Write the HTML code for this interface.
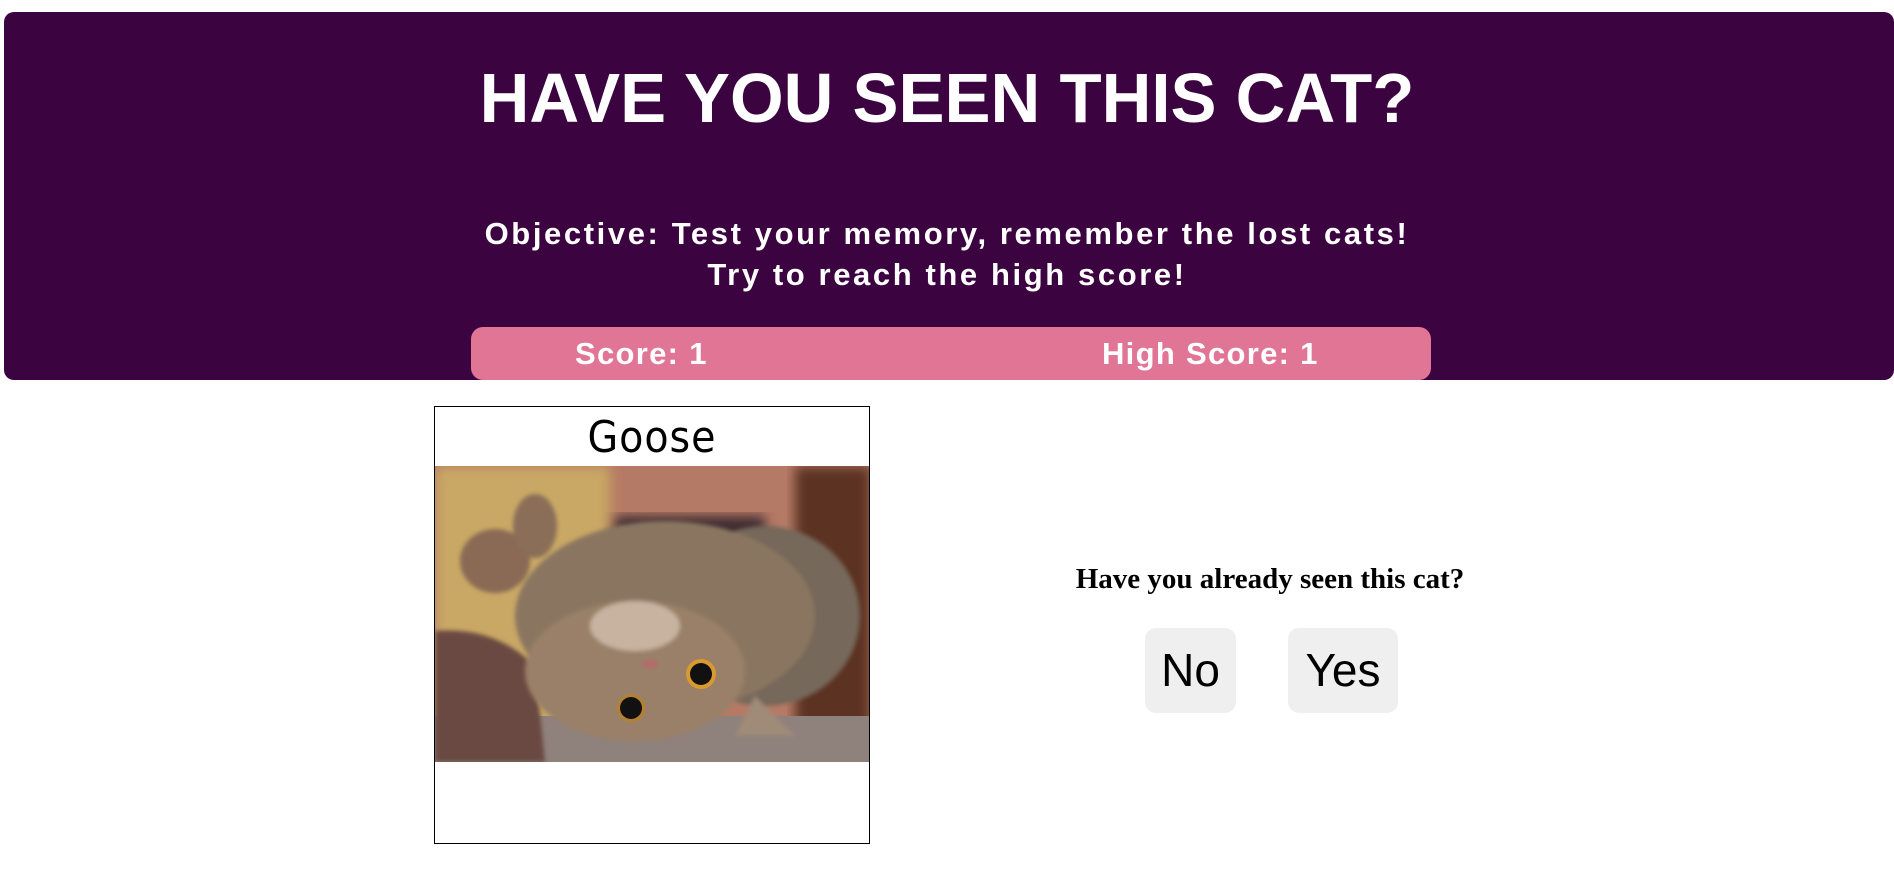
<!DOCTYPE html>
<html><head><meta charset="utf-8"><style>
html,body{margin:0;padding:0;background:#fff;width:1894px;height:882px;overflow:hidden;position:relative;font-family:"Liberation Sans",sans-serif}
.hdr{position:absolute;left:4px;top:12px;width:1890px;height:368px;background:#3b0340;border-radius:10px}
.t{position:absolute;left:0;width:1894px;text-align:center;color:#fff;font-weight:bold;white-space:nowrap}
.bar{position:absolute;left:471px;top:327px;width:960px;height:53px;background:#e07596;border-radius:12px}
.s{position:absolute;top:327px;height:53px;line-height:53px;color:#fff;font-weight:bold;font-size:31px;white-space:nowrap;letter-spacing:1.3px}
.card{position:absolute;left:434px;top:406px;width:434px;height:436px;border:1px solid #000;background:#fff;overflow:hidden}
.btn{position:absolute;top:628px;height:85px;background:#efefef;border-radius:11px;font-size:46px;line-height:85px;text-align:center;color:#000}
</style></head><body>
<div class="hdr"></div>
<div class="t" style="top:58px;font-size:70px;line-height:80px;transform:scaleX(0.985)">HAVE YOU SEEN THIS CAT?</div>
<div class="t" style="top:214px;font-size:31px;line-height:40px;letter-spacing:2.6px">Objective: Test your memory, remember the lost cats!</div>
<div class="t" style="top:255px;font-size:31px;line-height:40px;letter-spacing:2.6px">Try to reach the high score!</div>
<div class="bar"></div>
<div class="s" style="left:575px">Score: 1</div>
<div class="s" style="left:1102px">High Score: 1</div>
<div class="card">
<div style="height:59px;line-height:62px;text-align:center;font-family:'DejaVu Sans Condensed','DejaVu Sans',sans-serif;font-size:44px;letter-spacing:1px">Goose</div>
<svg width="436" height="296" viewBox="0 0 436 296" style="display:block">
<defs><filter id="b"><feGaussianBlur stdDeviation="6"/></filter><filter id="b2"><feGaussianBlur stdDeviation="2"/></filter></defs>
<rect width="436" height="296" fill="#b57a65"/>
<rect x="0" y="0" width="175" height="296" fill="#c9a865" filter="url(#b)"/>
<rect x="360" y="0" width="76" height="296" fill="#5b3222" filter="url(#b)"/>
<rect x="180" y="50" width="150" height="40" fill="#3c2a30" filter="url(#b)"/>
<rect x="0" y="250" width="436" height="46" fill="#8f817c"/>
<path d="M0 165 Q60 160 100 200 L110 296 L0 296Z" fill="#6b4a42" filter="url(#b2)"/>
<g filter="url(#b2)">
<ellipse cx="330" cy="150" rx="95" ry="90" fill="#76685a"/>
<ellipse cx="230" cy="150" rx="150" ry="95" fill="#8a7660"/>
<ellipse cx="200" cy="205" rx="110" ry="70" fill="#9a8068"/>
<ellipse cx="60" cy="95" rx="35" ry="32" fill="#8a6a55"/>
<ellipse cx="100" cy="60" rx="22" ry="32" fill="#8a6e58"/>
<ellipse cx="200" cy="160" rx="45" ry="25" fill="#c7b3a0"/>
<path d="M320 230 L360 270 L300 270Z" fill="#a08a78"/>
</g>
<circle cx="266" cy="208" r="15" fill="#d99a30"/><circle cx="266" cy="208" r="11" fill="#111"/>
<circle cx="196" cy="242" r="14" fill="#b58030"/><circle cx="196" cy="242" r="11" fill="#111"/>
<ellipse cx="215" cy="198" rx="8" ry="5" fill="#b0706a"/>
</svg>
</div>
<div style="position:absolute;left:1040px;width:460px;top:561px;text-align:center;font-family:'Liberation Serif',serif;font-weight:bold;font-size:29px;line-height:36px;white-space:nowrap">Have you already seen this cat?</div>
<div class="btn" style="left:1145px;width:91px">No</div>
<div class="btn" style="left:1288px;width:110px">Yes</div>
</body></html>
